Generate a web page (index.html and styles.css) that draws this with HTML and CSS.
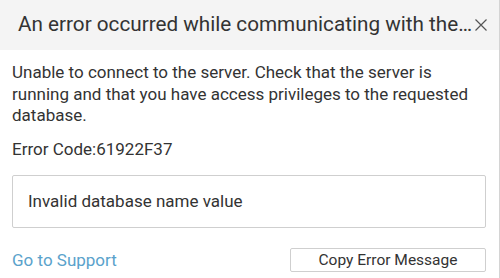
FILE: index.html
```html
<!DOCTYPE html>
<html>
<head>
<meta charset="utf-8">
<link rel="stylesheet" href="styles.css">
</head>
<body>
<div class="dialog">
  <div class="header">
    <div class="title">An error occurred while communicating with the…</div>
    <button class="close" aria-label="Close">
      <svg width="12" height="12" viewBox="0 0 12 12"><path d="M0.5 0.5 L11.5 11.5 M11.5 0.5 L0.5 11.5" stroke="#555" stroke-width="1.2" fill="none"/></svg>
    </button>
  </div>
  <div class="content">
    <p class="message">Unable to connect to the server. Check that the server is running and that you have access privileges to the requested database.</p>
    <p class="code">Error Code:61922F37</p>
    <div class="details">Invalid database name value</div>
    <div class="footer">
      <a class="support" href="#">Go to Support</a>
      <button class="copy">Copy Error Message</button>
    </div>
  </div>
</div>
</body>
</html>
```

FILE: styles.css
```css
html, body {
  margin: 0;
  padding: 0;
  background: #fff;
}
body {
  font-family: Roboto, "Liberation Sans", sans-serif;
  color: #333;
}
.dialog {
  width: 500px;
  height: 278px;
  box-sizing: border-box;
  border-right: 1px solid #d4d4d4;
  display: flex;
  flex-direction: column;
}
.header {
  height: 50px;
  flex: none;
  background: #f4f4f4;
  display: flex;
  align-items: center;
  padding: 0 12px 0 18px;
  box-sizing: border-box;
}
.title {
  flex: 1;
  min-width: 0;
  font-size: 20.7px;
  white-space: nowrap;
  color: #333;
  padding-bottom: 2px;
}
.close {
  flex: none;
  border: 0;
  background: none;
  padding: 0;
  margin-left: 3px;
  width: 12px;
  height: 12px;
  display: flex;
}
.content {
  padding: 0 12px;
  flex: 1;
  display: flex;
  flex-direction: column;
}
.message {
  margin: 12px 0 0;
  font-size: 17px;
  line-height: 21.5px;
}
.code {
  margin: 12px 0 0;
  font-size: 17px;
  line-height: 21px;
}
.details {
  margin-top: 15px;
  height: 53px;
  box-sizing: border-box;
  border: 1px solid #cfcfcf;
  border-radius: 2px;
  display: flex;
  align-items: center;
  padding-left: 15px;
  font-size: 17px;
  margin-right: 1px;
}
.footer {
  margin-top: 20px;
  display: flex;
  justify-content: space-between;
  align-items: center;
  margin-right: 1px;
}
.support {
  color: #5aa2cb;
  text-decoration: none;
  font-size: 17px;
}
.copy {
  width: 196px;
  height: 24px;
  border: 1px solid #cfcfcf;
  border-radius: 2px;
  background: #fff;
  font-family: inherit;
  font-size: 15.5px;
  color: #333;
  padding: 0;
}
```
